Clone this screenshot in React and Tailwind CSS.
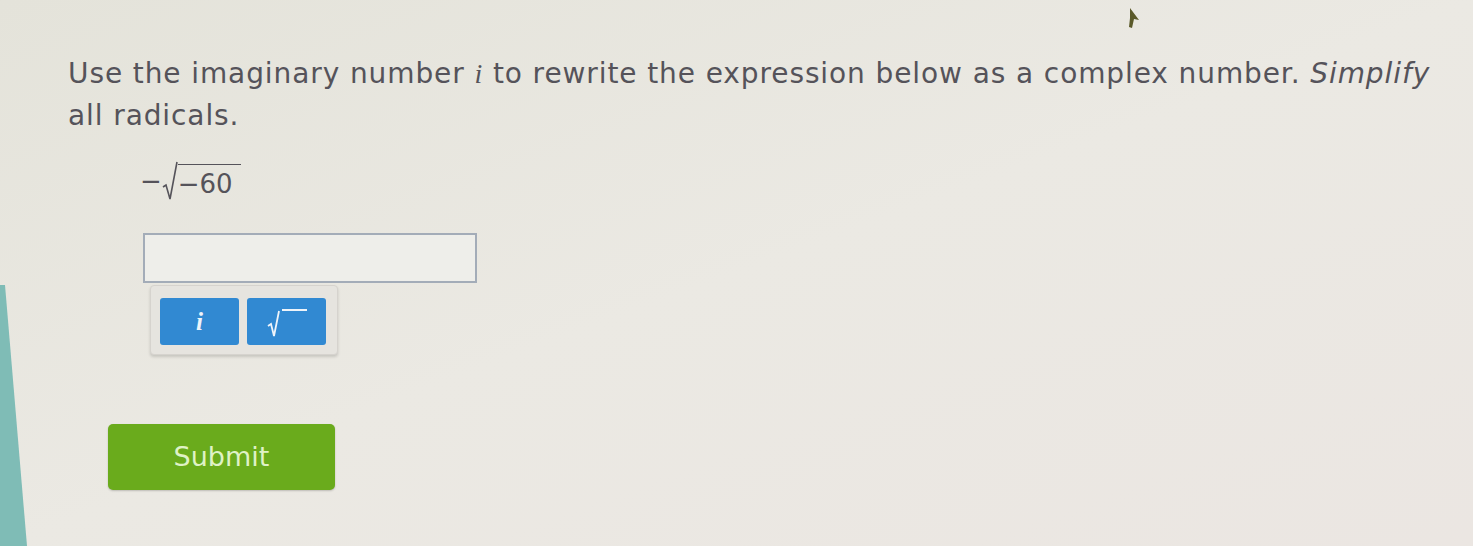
export default function App() {
  return (
    <div
      className="relative w-[1473px] h-[546px] overflow-hidden bg-gradient-to-br from-[#e4e3da] via-[#ebe9e3] to-[#ebe6e2] text-[#55535a]"
      style={{ fontFamily: '"DejaVu Sans", Verdana, sans-serif' }}
    >
      {/* teal edge of the window behind */}
      <svg className="absolute left-0 top-0" width="40" height="546" viewBox="0 0 40 546">
        <polygon points="0,285 5,285 27,546 0,546" fill="#7fbcb6" />
      </svg>

      <div className="pl-[68px] pt-[53px]">
        <p className="text-[28px] leading-[42px] tracking-[0.9px] whitespace-nowrap">
          Use the imaginary number{" "}
          <span className="italic" style={{ fontFamily: '"Liberation Serif", serif' }}>
            i
          </span>{" "}
          to rewrite the expression below as a complex number.{" "}
          <span className="italic">Simplify</span>
          <br />
          all radicals.
        </p>

        <div className="mt-[24px] ml-[72px] flex items-end text-[26px] leading-none h-[42px]">
          <span className="mb-[9px]">−</span>
          <svg width="16" height="40" viewBox="0 0 16 40" className="mb-[2px]">
            <path d="M1 26 L4 24 L8 38 L15 1" fill="none" stroke="#55535a" strokeWidth="1.6" />
          </svg>
          <span className="border-t-[1.5px] border-[#55535a] pt-[6px] pr-[8px] mb-[6px]">−60</span>
        </div>

        <div className="ml-[75px] mt-[30px] w-[334px] h-[50px] border-2 border-[#a3acb8] bg-[#eeeeea]" />

        <div className="ml-[82px] mt-[2px] w-[188px] p-[9px] pt-[12px] flex gap-[8px] bg-[#e6e4df] rounded-[4px] border border-[#d6d3ce] shadow-[0_2px_3px_rgba(0,0,0,0.15)]">
          <button className="w-[79px] h-[47px] rounded-[3px] bg-[#3189d2] text-[#eef4fa] text-[25px] font-bold italic flex items-center justify-center" style={{ fontFamily: '"Liberation Serif", serif' }}>
            i
          </button>
          <button className="w-[79px] h-[47px] rounded-[3px] bg-[#3189d2] flex items-center justify-center">
            <svg width="44" height="34" viewBox="0 0 44 34">
              <path d="M3 21 L6 19 L9 31 L14 6 M17 5 L42 5" fill="none" stroke="#eef4fa" strokeWidth="1.8" />
            </svg>
          </button>
        </div>

        <button className="ml-[40px] mt-[69px] w-[227px] h-[66px] rounded-[5px] bg-[#6aab1c] text-[#dff2c6] text-[27px] flex items-center justify-center shadow-[0_1px_2px_rgba(0,0,0,0.2)]">
          Submit
        </button>
      </div>

      {/* mouse pointer */}
      <svg className="absolute left-[1126px] top-[6px]" width="16" height="24" viewBox="0 0 16 24">
        <path d="M4 2 L13 14 L8 13 L6 22 L3 21 L4 12 Z" fill="#5b5a2a" />
      </svg>
    </div>
  );
}
